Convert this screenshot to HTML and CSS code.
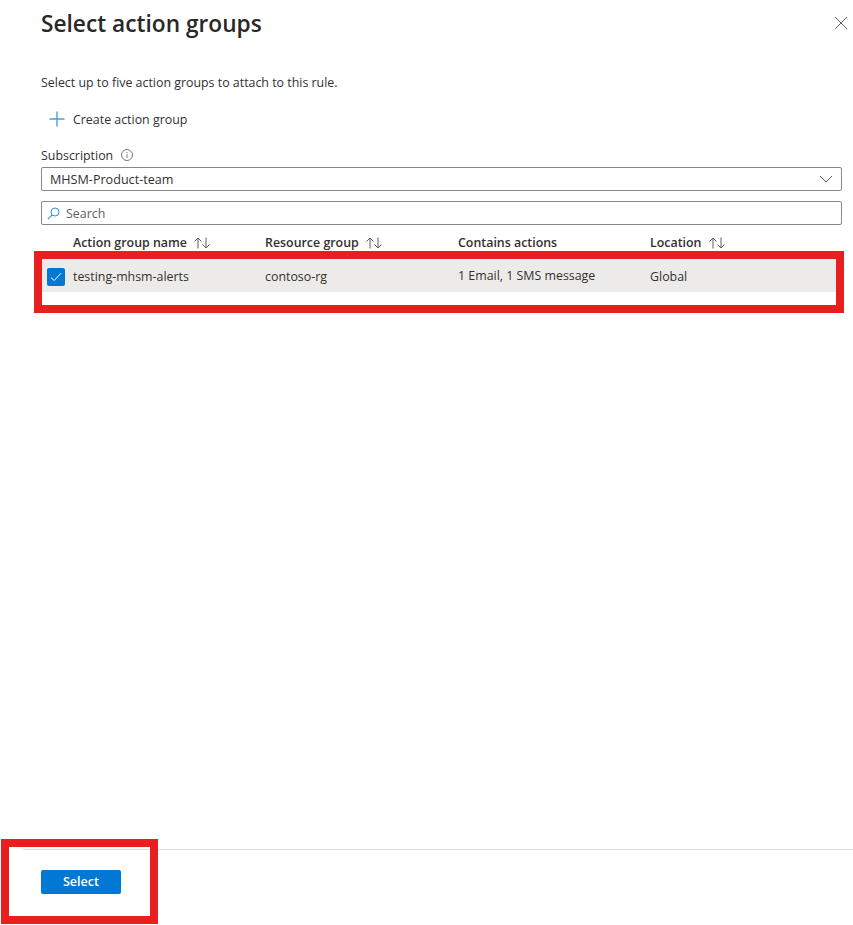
FILE: index.html
```html
<!DOCTYPE html>
<html lang="en">
<head>
<meta charset="utf-8">
<title>Select action groups</title>
<link rel="stylesheet" href="styles.css">
</head>
<body>
<div class="panel">
  <main class="content">
    <header class="head">
      <h1 class="title">Select action groups</h1>
      <button class="close" aria-label="Close">
        <svg width="14" height="14" viewBox="0 0 14 14"><path d="M1 1l12 12M13 1L1 13" fill="none" stroke="#605e5c" stroke-width="1"/></svg>
      </button>
    </header>
    <p class="desc">Select up to five action groups to attach to this rule.</p>
    <div class="create">
      <svg width="16" height="16" viewBox="0 0 16 16"><path d="M8 0.5v15M0.5 8h15" fill="none" stroke="#4a9fe0" stroke-width="1.4"/></svg>
      <span>Create action group</span>
    </div>
    <div class="label">
      <span>Subscription</span>
      <svg width="12" height="12" viewBox="0 0 12 12"><circle cx="6" cy="6" r="5.500" fill="none" stroke="#7a7876"/><path d="M6 5.200v3.600" stroke="#7a7876"/><path d="M6 3v1.200" stroke="#7a7876"/></svg>
    </div>
    <div class="field select">
      <span class="value">MHSM-Product-team</span>
      <svg width="14" height="8" viewBox="0 0 14 8"><path d="M1 1l6 6 6-6" fill="none" stroke="#605e5c" stroke-width="1"/></svg>
    </div>
    <div class="field search">
      <svg width="13" height="13" viewBox="0 0 13 13"><circle cx="8" cy="5" r="4" fill="none" stroke="#3a8fd6" stroke-width="1"/><path d="M5.200 7.800L0.800 12.200" fill="none" stroke="#3a8fd6" stroke-width="1.100"/></svg>
      <span>Search</span>
    </div>
    <div class="grid headrow">
      <div class="cell first">Action group name <span class="sort"><svg width="18" height="12" viewBox="0 0 18 12"><path d="M5 11.500V1M1.500 4.500L5 1l3.500 3.500M13 .5V11M9.500 7.500L13 11l3.500-3.500" fill="none" stroke="#605e5c"/></svg></span></div>
      <div class="cell">Resource group <span class="sort"><svg width="18" height="12" viewBox="0 0 18 12"><path d="M5 11.500V1M1.500 4.500L5 1l3.500 3.500M13 .5V11M9.500 7.500L13 11l3.500-3.500" fill="none" stroke="#605e5c"/></svg></span></div>
      <div class="cell">Contains actions</div>
      <div class="cell">Location <span class="sort"><svg width="18" height="12" viewBox="0 0 18 12"><path d="M5 11.500V1M1.500 4.500L5 1l3.500 3.500M13 .5V11M9.500 7.500L13 11l3.500-3.500" fill="none" stroke="#605e5c"/></svg></span></div>
    </div>
    <div class="grid datarow">
      <div class="cell first">
        <span class="check"><svg width="12" height="10" viewBox="0 0 12 10"><path d="M1 5.500L4.200 8.500L11 1.200" fill="none" stroke="#fff" stroke-width="1"/></svg></span>
        <span>testing-mhsm-alerts</span>
      </div>
      <div class="cell">contoso-rg</div>
      <div class="cell raised">1 Email, 1 SMS message</div>
      <div class="cell">Global</div>
    </div>
  </main>
  <footer class="foot">
    <button class="primary">Select</button>
  </footer>
</div>
<div class="mark mark-row"></div>
<div class="mark mark-btn"></div>
</body>
</html>
```

FILE: styles.css
```css
* { box-sizing: border-box; }
html, body { margin: 0; height: 925px; overflow: hidden; background: #fff; }
body {
  position: relative;
  font-family: "Open Sans", "Noto Sans", "Liberation Sans", sans-serif;
  font-size: 12.4px;
  color: #323130;
}
.panel { display: flex; flex-direction: column; height: 925px; }
.content { flex: 1; padding: 0 11px 0 41px; display: flex; flex-direction: column; }
.head { display: flex; justify-content: space-between; align-items: center; height: 46px; }
.title { margin: 0; font-size: 22.7px; font-weight: 600; color: #292827; }
.close { border: 0; background: none; padding: 0; margin-right: -6px; display: flex; }
.desc { margin: 28px 0 0; line-height: 17px; }
.create { display: flex; align-items: center; gap: 8px; margin: 18px 0 0 8px; height: 20px; }
.label { display: flex; align-items: center; gap: 8px; margin-top: 17px; height: 18px; }
.field {
  display: flex; align-items: center;
  height: 24px; border: 1px solid #8a8886; border-radius: 2px;
}
.select { margin-top: 3px; padding: 0 8px; justify-content: space-between; }
.value { font-size: 12.6px; }
.search { margin-top: 10px; padding: 0 5px; gap: 6px; color: #605e5c; }
.grid { display: grid; grid-template-columns: 224px 193px 192px 1fr; }
.headrow { margin-top: 7px; height: 20px; align-items: center; font-weight: 600; }
.headrow .first { padding-left: 32px; }
.sort { margin-left: 3px; display: inline-flex; vertical-align: -2px; }
.datarow { margin-top: 7px; height: 33px; padding-top: 2px; align-items: center; background: #edebe9; }
.datarow .first { display: flex; align-items: center; gap: 8px; padding-left: 6px; }
.raised { margin-top: -2px; }
.check {
  width: 18px; height: 18px; border-radius: 2px; background: #0078d4;
  display: flex; align-items: center; justify-content: center;
}
.foot { position: relative; height: 76px; margin-left: 23px; border-top: 1px solid #e1dfdd; padding: 20px 0 0 18px; }
.primary {
  width: 80px; height: 24px; border: 0; border-radius: 2px; padding: 0 0 2px;
  background: #0078d4; color: #fff; font: 600 12.6px "Open Sans", sans-serif;
}
.mark { position: absolute; border: 8px solid #e81f1f; pointer-events: none; }
.mark-row { left: 34px; top: 251px; width: 810px; height: 62px; }
.mark-btn { left: 1px; top: 839px; width: 157px; height: 85px; }
```
